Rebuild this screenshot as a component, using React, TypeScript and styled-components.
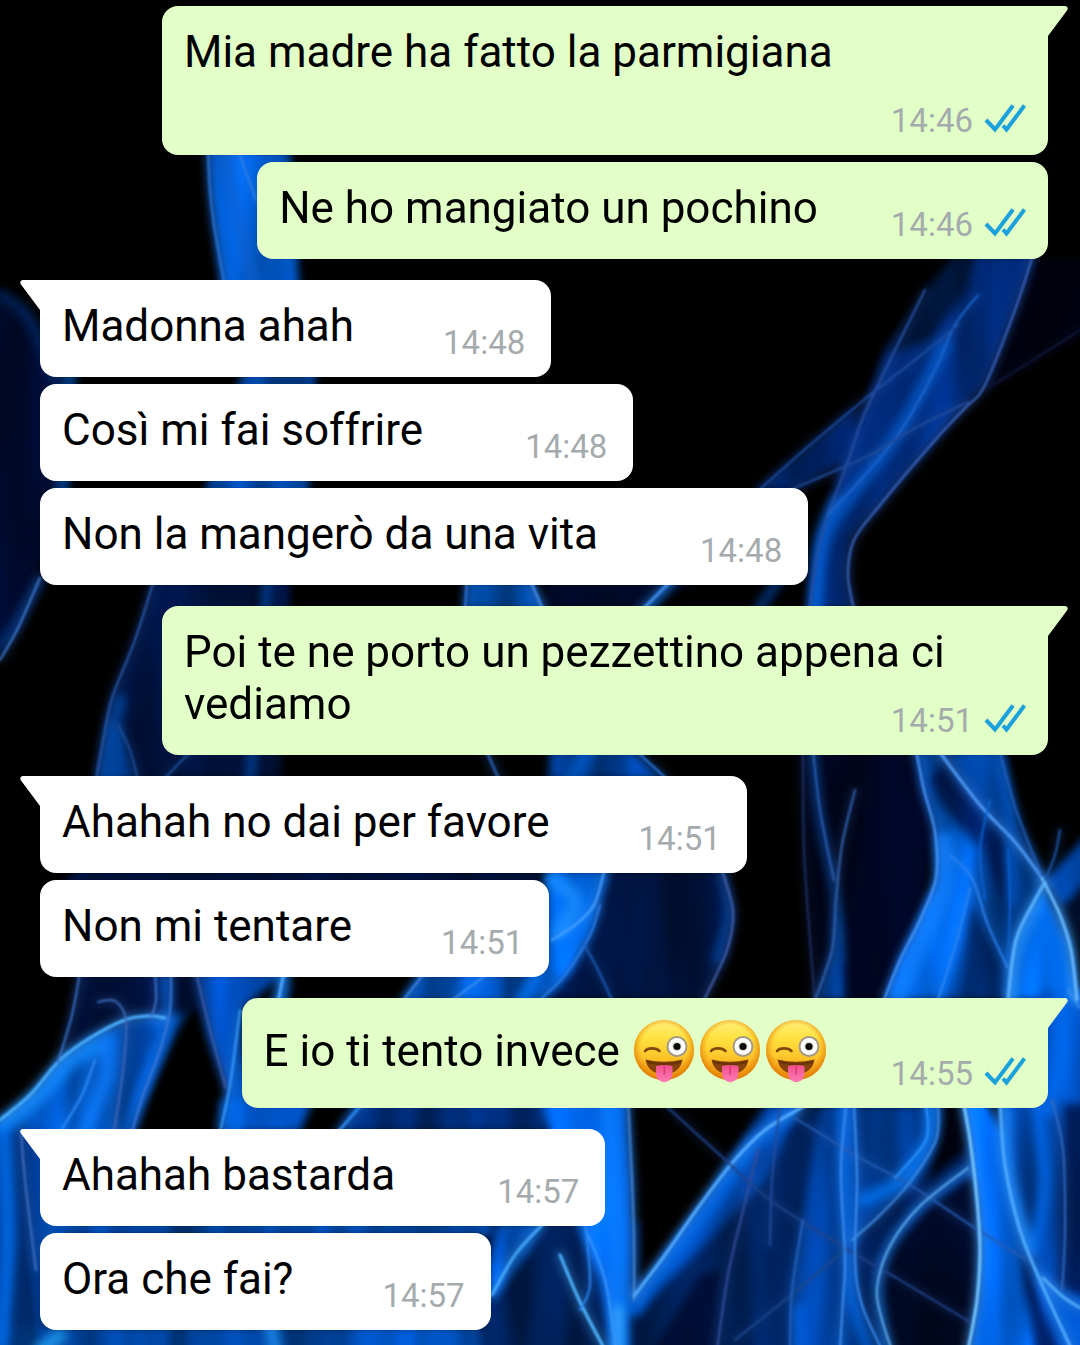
import React from "react";
import styled, { createGlobalStyle } from "styled-components";

const GlobalStyle = createGlobalStyle`
  *, *::before, *::after { box-sizing: border-box; }
  body { margin: 0; background: #000; }
`;

type Side = "in" | "out";

const bubbleColor: Record<Side, string> = { in: "#ffffff", out: "#e1ffc7" };

const Screen = styled.main`
  position: relative;
  min-height: 100vh;
  overflow: hidden;
  background: #000;
  font-family: Roboto, "Noto Sans", sans-serif;
`;

const Wallpaper = styled.svg`
  position: absolute;
  inset: 0;
  width: 100%;
  height: 100%;
`;

const Conversation = styled.ol`
  position: relative;
  display: flex;
  flex-direction: column;
  gap: 21px;
  margin: 0;
  padding: 6px 32px 15px 40px;
  list-style: none;
`;

const Group = styled.li<{ $side: Side }>`
  display: flex;
  flex-direction: column;
  align-items: ${(p) => (p.$side === "out" ? "flex-end" : "flex-start")};
  gap: 7px;
`;

const Bubble = styled.article<{ $side: Side; $tail: boolean }>`
  position: relative;
  display: flow-root;
  max-width: calc(100% - 122px);
  padding: ${(p) => (p.$side === "out" ? "20px 22px 14px" : "20px 26px 14px 22px")};
  border-radius: 16px;
  ${(p) => p.$tail && (p.$side === "out" ? "border-top-right-radius: 0;" : "border-top-left-radius: 0;")}
  background: ${(p) => bubbleColor[p.$side]};
`;

const Tail = styled.svg<{ $side: Side }>`
  position: absolute;
  top: 0;
  ${(p) => (p.$side === "out" ? "left: calc(100% - 1px);" : "right: calc(100% - 1px); transform: scaleX(-1);")}
  width: 21px;
  height: 32px;
  fill: ${(p) => bubbleColor[p.$side]};
`;

const Text = styled.span<{ $tall: boolean }>`
  color: #000;
  font-size: 44px;
  line-height: ${(p) => (p.$tall ? 65 : 52)}px;
`;

const Meta = styled.span<{ $tall: boolean; $gap: number }>`
  float: right;
  display: flex;
  align-items: flex-end;
  gap: 11px;
  margin-left: ${(p) => p.$gap}px;
  padding-top: ${(p) => (p.$tall ? 36 : 23)}px;
`;

const Time = styled.time`
  color: #a5abad;
  font-size: 33px;
  line-height: 40px;
`;

const Ticks = styled.svg`
  width: 42px;
  height: 40px;
  fill: none;
  stroke: #1ba2dd;
  stroke-width: 4;
`;

const EmojiArt = styled.svg`
  width: 66px;
  height: 65px;
  vertical-align: -17px;
`;

/* ---------- wallpaper ---------- */

type Pt = [number, number];

/* Catmull-Rom spline through the points, as cubic segments */
function smooth(points: Pt[]): string {
  let d = `M${points[0][0]} ${points[0][1]}`;
  for (let i = 0; i < points.length - 1; i++) {
    const a = points[Math.max(i - 1, 0)];
    const b = points[i];
    const c = points[i + 1];
    const e = points[Math.min(i + 2, points.length - 1)];
    d += `C${b[0] + (c[0] - a[0]) / 6} ${b[1] + (c[1] - a[1]) / 6} ${c[0] - (e[0] - b[0]) / 6} ${c[1] - (e[1] - b[1]) / 6} ${c[0]} ${c[1]}`;
  }
  return d;
}

const straight = (points: Pt[]) => "M" + points.map((p) => p.join(" ")).join("L") + "Z";

const bodies: [string, Pt[]][] = [
  ["#0058c8", [[208, 150], [210, 190], [214, 225], [224, 300], [300, 300], [290, 150]]],
  ["#000a2c", [[-10, 300], [25, 312], [45, 350], [62, 385], [60, 480], [42, 570], [20, 628], [-10, 665]]],
  ["#0048a8", [[243, 370], [315, 370], [308, 495], [205, 495]]],
  ["#00020f", [[1030, 259], [1090, 259], [1090, 330], [985, 390]]],
  ["#002a78", [[955, 255], [920, 300], [885, 350], [870, 395], [855, 430], [840, 470], [828, 515], [815, 550], [808, 610], [854, 610], [848, 580], [850, 540], [880, 505], [935, 440], [965, 405], [985, 385], [1015, 310], [1034, 255]]],
  ["#001538", [[955, 255], [925, 290], [885, 355], [930, 340], [965, 290], [975, 255]]],
  ["#00205e", [[858, 405], [755, 492], [795, 490], [850, 458]]],
  ["#00123c", [[153, 580], [135, 640], [113, 695], [106, 725], [96, 780], [280, 780], [290, 580]]],
  ["#003a8c", [[108, 715], [97, 780], [136, 780], [122, 735]]],
  ["#0048a0", [[467, 580], [532, 580], [544, 610], [464, 610]]],
  ["#000820", [[545, 580], [700, 580], [640, 610], [545, 610]]],
  ["#00409c", [[550, 750], [630, 750], [665, 780], [548, 780]]],
  ["#00123e", [[80, 870], [540, 870], [540, 884], [60, 884]]],
  ["#001440", [[575, 870], [722, 870], [734, 912], [727, 955], [704, 1000], [545, 1000]]],
  ["#0062d8", [[545, 870], [610, 870], [592, 930], [572, 970], [545, 1000]]],
  ["#000620", [[800, 750], [916, 750], [935, 835], [920, 920], [885, 1000], [815, 1000]]],
  ["#00409a", [[836, 890], [832, 950], [815, 1000], [844, 1000], [842, 930]]],
  ["#0044a0", [[915, 750], [922, 790], [935, 830], [936, 880], [920, 920], [900, 960], [884, 1000], [1010, 1000], [1045, 880], [1020, 825], [1002, 750]]],
  ["#0066e4", [[937, 800], [936, 880], [900, 960], [884, 1000], [945, 1000], [970, 900], [975, 850]]],
  ["#001f64", [[945, 762], [978, 806], [1005, 840], [1008, 920], [985, 850], [955, 820], [930, 780]]],
  ["#002868", [[972, 905], [1000, 960], [1003, 1000], [960, 1000]]],
  ["#0050c0", [[1090, 832], [1045, 880], [1060, 910], [1090, 880]]],
  ["#001030", [[1060, 905], [1090, 890], [1090, 970]]],
  ["#006cee", [[1043, 885], [1020, 930], [1008, 1000], [1078, 1000], [1070, 945]]],
  ["#0054c8", [[1040, 990], [1090, 990], [1090, 1110], [1040, 1110]]],
  ["#001038", [[80, 972], [205, 972], [200, 1010], [60, 1060]]],
  ["#0058c8", [[-10, 1130], [30, 1095], [60, 1060], [90, 1037], [130, 1020], [188, 1012], [175, 1035], [150, 1090], [130, 1132], [-10, 1355]]],
  ["#003c90", [[122, 1022], [150, 1020], [158, 1035], [135, 1090], [118, 1132]]],
  ["#0048b0", [[195, 972], [285, 972], [242, 1010], [240, 1132], [220, 1132], [226, 1090], [205, 1030]]],
  ["#0052c4", [[220, 1100], [312, 1100], [300, 1132], [218, 1132]]],
  ["#0050b8", [[420, 972], [560, 972], [540, 1002], [400, 1002]]],
  ["#002c78", [[355, 1100], [545, 1100], [545, 1132], [338, 1132]]],
  ["#003c98", [[-10, 1130], [45, 1130], [45, 1355], [-10, 1355]]],
  ["#0048a8", [[40, 1222], [490, 1222], [490, 1236], [40, 1236]]],
  ["#002058", [[490, 1222], [640, 1222], [640, 1355], [480, 1355]]],
  ["#005edc", [[500, 1222], [542, 1222], [530, 1252], [492, 1300], [490, 1270]]],
  ["#0048a8", [[-10, 1326], [480, 1326], [480, 1355], [-10, 1355]]],
  ["#0060dc", [[540, 1100], [628, 1100], [633, 1180], [634, 1290], [628, 1355], [612, 1355], [600, 1280], [575, 1220]]],
  ["#00225c", [[770, 1105], [735, 1160], [700, 1205], [660, 1260], [630, 1300], [628, 1355], [800, 1355], [850, 1107]]],
  ["#0048b0", [[765, 1105], [800, 1105], [765, 1180], [700, 1250], [650, 1300], [632, 1320], [634, 1295], [700, 1205]]],
  ["#000e34", [[700, 1275], [720, 1270], [712, 1355], [650, 1355]]],
  ["#003c94", [[795, 1355], [792, 1290], [803, 1210], [822, 1105], [942, 1105], [940, 1140], [912, 1185], [865, 1230], [852, 1250], [885, 1355]]],
  ["#001f58", [[945, 1105], [962, 1105], [975, 1180], [930, 1200], [890, 1245], [876, 1290], [888, 1355], [860, 1355], [850, 1250], [912, 1185], [940, 1140]]],
  ["#00020c", [[943, 1105], [960, 1105], [966, 1150], [930, 1180]]],
  ["#000a28", [[970, 1172], [920, 1212], [892, 1248], [880, 1290], [895, 1355], [972, 1355], [979, 1240]]],
  ["#0048b0", [[1000, 1100], [1090, 1100], [1090, 1355], [1040, 1355], [1015, 1240]]],
  ["#001c58", [[1064, 1105], [1090, 1105], [1090, 1300], [1058, 1285]]],
  ["#0068ee", [[962, 1100], [970, 1140], [978, 1210], [980, 1250], [977, 1300], [968, 1355], [1036, 1355], [1018, 1240], [1002, 1130], [985, 1100]]],
  ["#001a54", [[1020, 1250], [1060, 1355], [1038, 1355], [1025, 1290]]],
];

const glows: [string, number, Pt[]][] = [
  ["#0c60d0", 14, [[225, 150], [236, 210], [255, 290]]],
  ["#002868", 12, [[0, 295], [24, 312], [40, 340], [56, 382]]],
  ["#0050b0", 12, [[70, 370], [62, 495]]],
  ["#003078", 10, [[40, 580], [18, 620], [0, 645]]],
  ["#0058c8", 14, [[945, 345], [900, 430], [840, 510], [822, 550], [815, 610]]],
  ["#0068e8", 10, [[835, 500], [820, 540], [814, 610]]],
  ["#0050b4", 8, [[268, 580], [262, 640], [250, 780]]],
  ["#0048a4", 12, [[120, 700], [112, 740], [108, 780]]],
  ["#0062d0", 8, [[675, 578], [645, 612]]],
  ["#003c90", 10, [[780, 578], [757, 612]]],
  ["#0058c0", 14, [[590, 750], [570, 780]]],
  ["#0048a8", 8, [[722, 872], [728, 915], [716, 960]]],
  ["#1c90ff", 14, [[552, 880], [575, 900], [560, 930]]],
  ["#003c88", 8, [[813, 750], [820, 820], [836, 900], [840, 960]]],
  ["#1080ff", 16, [[945, 840], [945, 890], [918, 950], [898, 1000]]],
  ["#0054c4", 10, [[1000, 760], [1010, 830], [1012, 900]]],
  ["#1c8cff", 10, [[1038, 905], [1018, 950], [1013, 1000]]],
  ["#1c8cff", 8, [[1058, 910], [1070, 950], [1074, 1000]]],
  ["#1088ff", 16, [[0, 1128], [40, 1096], [70, 1062], [100, 1046]]],
  ["#0c7cff", 16, [[108, 1040], [105, 1080], [85, 1130]]],
  ["#0060dc", 10, [[165, 978], [166, 1020], [150, 1070], [130, 1132]]],
  ["#006cec", 14, [[282, 972], [280, 1000], [250, 1060], [234, 1132]]],
  ["#0074f4", 12, [[540, 972], [520, 1002]]],
  ["#0070f0", 14, [[4, 1130], [8, 1240], [2, 1345]]],
  ["#20a0f0", 14, [[40, 1350], [60, 1336]]],
  ["#1c90f8", 14, [[270, 1320], [275, 1350]]],
  ["#0a7cff", 18, [[608, 1100], [616, 1200], [620, 1350]]],
  ["#40b0ff", 10, [[618, 1310], [618, 1350]]],
  ["#0068ea", 16, [[790, 1112], [750, 1150], [708, 1210], [665, 1265], [635, 1308]]],
  ["#0068e8", 12, [[845, 1105], [845, 1180], [848, 1250], [852, 1300], [868, 1350]]],
  ["#0074f4", 14, [[930, 1105], [928, 1140], [905, 1178], [865, 1200]]],
  ["#005cd4", 10, [[968, 1170], [920, 1208], [888, 1250], [878, 1290], [888, 1350]]],
  ["#0062e0", 12, [[800, 1350], [800, 1310]]],
  ["#1484ff", 12, [[1006, 1110], [1010, 1180], [1030, 1250]]],
  ["#006cf0", 12, [[1036, 1100], [1045, 1180], [1035, 1250]]],
  ["#006cf0", 14, [[1062, 990], [1062, 1050], [1050, 1110]]],
  ["#0062e0", 12, [[1050, 1290], [1080, 1335]]],
];

const strands: [string, number, Pt[]][] = [
  ["#2f78d8", 2, [[208, 150], [210, 190], [214, 225], [224, 282]]],
  ["#2f7fe6", 2, [[238, 150], [256, 200]]],
  ["#3c78cc", 2, [[40, 578], [18, 628], [0, 660]]],
  ["#3c68c0", 2, [[1033, 255], [1015, 310], [985, 385], [965, 408], [935, 440], [880, 505], [854, 540], [848, 575], [854, 610]]],
  ["#2850a0", 2, [[925, 290], [900, 340], [878, 385], [862, 420], [845, 470], [828, 515], [816, 560], [810, 610]]],
  ["#1c64cc", 2, [[978, 295], [955, 325], [935, 370], [900, 432], [865, 475], [828, 515]]],
  ["#1c4ca0", 2, [[958, 325], [915, 360], [870, 395], [810, 445], [757, 492]]],
  ["#204a98", 2, [[968, 402], [915, 428], [870, 455], [790, 490]]],
  ["#10183c", 2, [[1080, 330], [1025, 365], [985, 390]]],
  ["#2a58a8", 2, [[154, 580], [135, 640], [113, 695], [106, 725], [96, 780]]],
  ["#1c4c94", 2, [[118, 725], [130, 750], [138, 780]]],
  ["#1c4c94", 2, [[192, 750], [163, 780]]],
  ["#3478dc", 2, [[467, 580], [465, 610]]],
  ["#3c84e0", 3, [[530, 580], [543, 610]]],
  ["#4090ec", 3, [[672, 580], [640, 612]]],
  ["#2456a0", 3, [[486, 750], [500, 782]]],
  ["#2a78e0", 2, [[635, 750], [668, 780]]],
  ["#50a4ff", 2, [[604, 872], [594, 905], [575, 925], [552, 940]]],
  ["#2c80e8", 2, [[600, 905], [590, 935], [565, 975], [540, 1000]]],
  ["#1c5cb8", 2, [[583, 942], [598, 970], [612, 1000]]],
  ["#4464b0", 2, [[722, 870], [733, 912], [727, 950], [704, 1000]]],
  ["#1c3064", 2, [[803, 750], [804, 850], [810, 940], [815, 1000]]],
  ["#2860b4", 2, [[813, 750], [820, 810], [834, 880]]],
  ["#3464b0", 2, [[855, 790], [842, 845], [836, 900], [832, 950], [815, 1000]]],
  ["#4c9cff", 2, [[916, 750], [924, 790], [935, 832], [936, 878], [920, 920], [900, 960], [884, 1000]]],
  ["#4c98f4", 3, [[938, 750], [980, 805], [1015, 842], [1042, 878]]],
  ["#68b8ff", 3, [[1042, 878], [1060, 915], [1071, 950], [1077, 1000]]],
  ["#2060bc", 2, [[1000, 752], [1016, 810], [1042, 876]]],
  ["#5cb4ff", 3, [[1045, 882], [1035, 900], [1016, 940], [1008, 1000]]],
  ["#2c84f0", 2, [[950, 855], [972, 878], [988, 925], [1008, 968]]],
  ["#2c84f0", 2, [[970, 888], [957, 940], [938, 1000]]],
  ["#1c58b0", 2, [[1060, 830], [1055, 855], [1045, 880]]],
  ["#0c60d0", 2, [[990, 800], [980, 850], [985, 900]]],
  ["#0c60d0", 2, [[1008, 850], [1010, 900], [1008, 960]]],
  ["#4cb0ff", 3, [[0, 1120], [30, 1095], [60, 1060], [90, 1038], [125, 1020], [150, 1016], [165, 1018]]],
  ["#3870c4", 2, [[80, 972], [72, 1015], [58, 1062]]],
  ["#3c68b8", 2, [[98, 1002], [115, 1001], [126, 1020], [123, 1070], [114, 1132]]],
  ["#3a70cc", 2, [[155, 972], [156, 1000], [151, 1018]]],
  ["#3a78d8", 2, [[171, 972], [170, 1010], [160, 1050], [143, 1095], [132, 1132]]],
  ["#3c5ca4", 2, [[196, 972], [210, 1030], [226, 1088]]],
  ["#3aa0ff", 2, [[240, 1010], [230, 1085], [220, 1132]]],
  ["#2c8cff", 2, [[60, 1132], [82, 1095], [95, 1060]]],
  ["#50a8ff", 3, [[284, 972], [278, 1002]]],
  ["#4090f0", 2, [[425, 972], [402, 1002]]],
  ["#3a90f0", 2, [[490, 972], [450, 1002]]],
  ["#2b88e8", 3, [[362, 1104], [338, 1132]]],
  ["#3c70c0", 2, [[21, 1130], [25, 1180], [36, 1270]]],
  ["#46a8f8", 3, [[542, 1225], [515, 1255], [492, 1295]]],
  ["#4888d0", 2, [[628, 1100], [632, 1180], [634, 1240], [634, 1300]]],
  ["#3a98ff", 2, [[585, 1228], [605, 1280], [616, 1350]]],
  ["#4cb4ff", 3, [[560, 1255], [580, 1302], [605, 1350]]],
  ["#2c88f0", 2, [[586, 1228], [590, 1285], [580, 1310]]],
  ["#54acff", 3, [[806, 1105], [765, 1130], [733, 1162], [700, 1205], [665, 1255], [634, 1296]]],
  ["#344c9c", 2, [[717, 1350], [728, 1275], [742, 1215], [758, 1150]]],
  ["#204c9c", 2, [[770, 1245], [772, 1180], [780, 1105]]],
  ["#20448c", 2, [[665, 1105], [720, 1155], [770, 1200], [845, 1248], [900, 1280], [970, 1322]]],
  ["#245cb4", 2, [[795, 1118], [860, 1158], [910, 1185], [975, 1228], [1030, 1262]]],
  ["#1c488c", 2, [[735, 1340], [785, 1300], [845, 1250]]],
  ["#2464c0", 2, [[790, 1350], [792, 1290], [803, 1220]]],
  ["#3c90f4", 2, [[846, 1105], [841, 1170], [845, 1260], [843, 1300], [840, 1350]]],
  ["#3c90f4", 2, [[854, 1105], [857, 1180], [855, 1260], [862, 1305], [882, 1350]]],
  ["#408ce4", 2, [[938, 1105], [936, 1140], [910, 1182], [880, 1215], [852, 1240]]],
  ["#2c94ff", 2, [[926, 1105], [926, 1140], [895, 1178]]],
  ["#60acec", 2, [[968, 1168], [920, 1206], [890, 1246], [877, 1288], [882, 1320], [892, 1350]]],
  ["#78c8ff", 3, [[963, 1100], [970, 1140], [977, 1200], [980, 1250], [977, 1300], [968, 1350]]],
  ["#50acff", 3, [[1000, 1100], [1005, 1165], [1020, 1230], [1042, 1285], [1072, 1350]]],
  ["#50a8f8", 3, [[1043, 1278], [1062, 1296], [1080, 1308]]],
  ["#3068c0", 2, [[1052, 1100], [1063, 1150], [1065, 1230], [1062, 1290]]],
  ["#3c90f0", 2, [[1080, 1008], [1068, 990]]],
];

const filterArea = { x: -20, y: -20, width: 1120, height: 1385, filterUnits: "userSpaceOnUse" as const };

function Flames() {
  return (
    <Wallpaper viewBox="0 0 1080 1345" preserveAspectRatio="xMidYMid slice" aria-hidden="true">
      <defs>
        {/* softened shapes, multiplied by tall noise so that they read as streaks of flame */}
        <filter id="soft" {...filterArea} colorInterpolationFilters="sRGB">
          <feGaussianBlur stdDeviation="4" result="shape" />
          <feTurbulence type="fractalNoise" baseFrequency="0.024 0.004" numOctaves="2" seed="8" />
          <feColorMatrix values="0 0 2 0 -0.5  0 0 2 0 -0.5  0 0 2 0 -0.5  0 0 0 0 1" result="streaks" />
          <feComposite in="shape" in2="streaks" operator="arithmetic" k1="0.6" k2="0.7" />
        </filter>
        <filter id="glow" {...filterArea} colorInterpolationFilters="sRGB">
          <feGaussianBlur stdDeviation="5" />
        </filter>
        <filter id="fine" {...filterArea} colorInterpolationFilters="sRGB">
          <feGaussianBlur stdDeviation="1" />
        </filter>
      </defs>
      <g filter="url(#soft)">
        {bodies.map(([color, pts], i) => (
          <path key={i} d={straight(pts)} fill={color} />
        ))}
      </g>
      <g filter="url(#glow)" fill="none" strokeLinecap="round">
        {glows.map(([color, width, pts], i) => (
          <path key={i} d={smooth(pts)} stroke={color} strokeWidth={width} opacity="0.8" />
        ))}
        {strands.map(([color, width, pts], i) => (
          <path key={`halo-${i}`} d={smooth(pts)} stroke={color} strokeWidth={width * 3} opacity="0.35" />
        ))}
      </g>
      <g filter="url(#fine)" fill="none" strokeLinecap="round">
        {strands.map(([color, width, pts], i) => (
          <path key={i} d={smooth(pts)} stroke={color} strokeWidth={width} />
        ))}
      </g>
    </Wallpaper>
  );
}

/* ---------- message parts ---------- */

function WinkingTongue() {
  return (
    <EmojiArt viewBox="0 0 66 65" role="img" aria-label="😜">
      <defs>
        <linearGradient id="face" x1="0" y1="0" x2="0" y2="1">
          <stop offset="0" stopColor="#fff07c" />
          <stop offset="0.3" stopColor="#ffe140" />
          <stop offset="0.6" stopColor="#fdc82c" />
          <stop offset="1" stopColor="#f08c0a" />
        </linearGradient>
        <radialGradient id="rim" cx="0.5" cy="0.46" r="0.54">
          <stop offset="0.7" stopColor="#f29a10" stopOpacity="0" />
          <stop offset="1" stopColor="#e07c08" stopOpacity="1" />
        </radialGradient>
        <linearGradient id="tongue" x1="0" y1="0" x2="0" y2="1">
          <stop offset="0" stopColor="#f0508c" />
          <stop offset="1" stopColor="#ff7cb4" />
        </linearGradient>
      </defs>
      <circle cx="33" cy="32" r="30" fill="url(#face)" />
      <circle cx="33" cy="32" r="30" fill="url(#rim)" />
      <path d="M14 33C17 29.500 25 29.500 28.500 33" fill="none" stroke="#80480a" strokeWidth="2.600" strokeLinecap="round" />
      <circle cx="46" cy="28.500" r="9.500" fill="#fff" stroke="#a39a84" strokeWidth="2" />
      <circle cx="46" cy="28.500" r="5" fill="#e4e4e0" />
      <circle cx="46" cy="28.500" r="3.600" fill="#0c0906" />
      <path d="M14.500 41.500Q33 46 51.500 41.500Q49 56 33 56Q17 56 14.500 41.500Z" fill="#85430a" />
      <path d="M15.500 42.500Q33 47 50.500 42.500L49 45.500Q33 49 17 45.500Z" fill="#6a3406" />
      <path d="M25 48Q33 46 41.500 48V56A8.200 8.200 0 0 1 25 56Z" fill="url(#tongue)" />
      <path d="M33.200 48V56" stroke="#dc3a78" strokeWidth="1.500" strokeLinecap="round" />
    </EmojiArt>
  );
}

interface Message {
  text: string;
  time: string;
  gap: number;
  emojis?: number;
}

interface MessageGroup {
  side: Side;
  messages: Message[];
}

const groups: MessageGroup[] = [
  {
    side: "out",
    messages: [
      { text: "Mia madre ha fatto la parmigiana", time: "14:46", gap: 73 },
      { text: "Ne ho mangiato un pochino", time: "14:46", gap: 73 },
    ],
  },
  {
    side: "in",
    messages: [
      { text: "Madonna ahah", time: "14:48", gap: 89 },
      { text: "Così mi fai soffrire", time: "14:48", gap: 102 },
      { text: "Non la mangerò da una vita", time: "14:48", gap: 102 },
    ],
  },
  {
    side: "out",
    messages: [{ text: "Poi te ne porto un pezzettino appena ci vediamo", time: "14:51", gap: 73 }],
  },
  {
    side: "in",
    messages: [
      { text: "Ahahah no dai per favore", time: "14:51", gap: 89 },
      { text: "Non mi tentare", time: "14:51", gap: 89 },
    ],
  },
  {
    side: "out",
    messages: [{ text: "E io ti tento invece ", time: "14:55", gap: 62, emojis: 3 }],
  },
  {
    side: "in",
    messages: [
      { text: "Ahahah bastarda", time: "14:57", gap: 102 },
      { text: "Ora che fai?", time: "14:57", gap: 89 },
    ],
  },
];

function MessageBubble({ message, side, first }: { message: Message; side: Side; first: boolean }) {
  const tall = Boolean(message.emojis);
  return (
    <Bubble $side={side} $tail={first}>
      {first && (
        <Tail $side={side} viewBox="0 0 21 32" aria-hidden="true">
          <path d="M0 0H18C20.500 0 21.500 2.500 20 4.500L1 30V32H0Z" />
        </Tail>
      )}
      <Text $tall={tall}>
        {message.text}
        {Array.from({ length: message.emojis ?? 0 }, (_, i) => (
          <WinkingTongue key={i} />
        ))}
      </Text>
      <Meta $tall={tall} $gap={message.gap}>
        <Time dateTime={message.time}>{message.time}</Time>
        {side === "out" && (
          <Ticks viewBox="0 0 42 40" role="img" aria-label="Letto">
            <path d="M2 19L11 28.500L29 4.500M19 24.500L22.500 28.500L40.500 4.500" />
          </Ticks>
        )}
      </Meta>
    </Bubble>
  );
}

export default function App() {
  return (
    <Screen>
      <GlobalStyle />
      <Flames />
      <Conversation>
        {groups.map((group, g) => (
          <Group key={g} $side={group.side}>
            {group.messages.map((message, m) => (
              <MessageBubble key={m} message={message} side={group.side} first={m === 0} />
            ))}
          </Group>
        ))}
      </Conversation>
    </Screen>
  );
}
